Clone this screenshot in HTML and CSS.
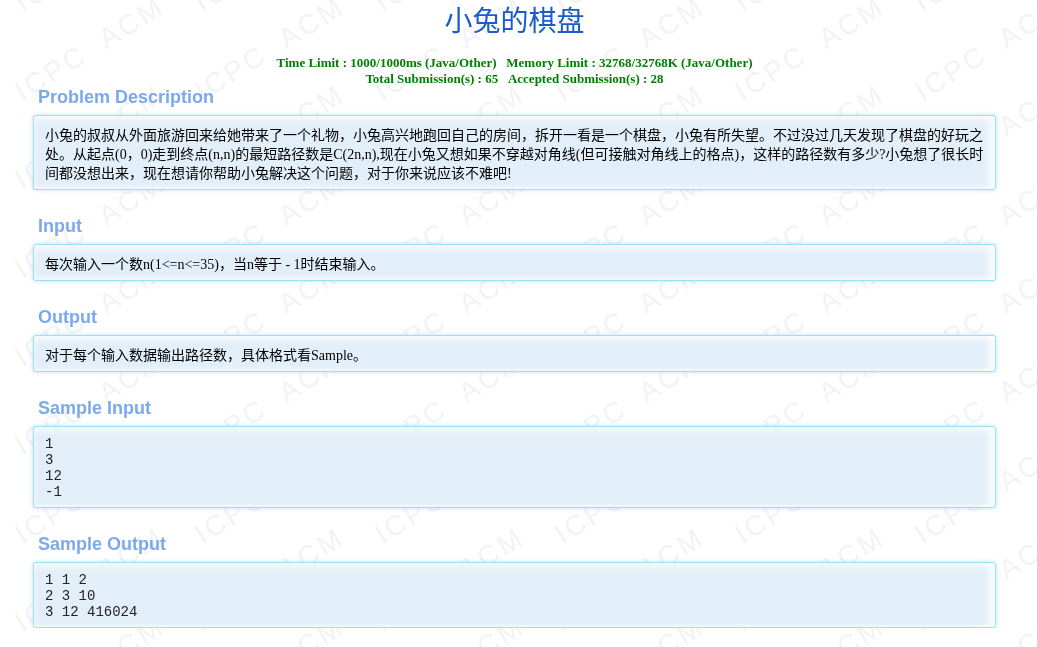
FILE: index.html
```html
<!DOCTYPE html>
<html lang="zh-CN">
<head>
<meta charset="utf-8">
<title>小兔的棋盘</title>
<link rel="stylesheet" href="styles.css">
</head>
<body>
<div class="watermark" aria-hidden="true"><div class="wm-grid"></div></div>
<main class="page">
  <h1 class="title">小兔的棋盘</h1>
  <div class="limits">
    <div>Time Limit : 1000/1000ms (Java/Other)&nbsp;&nbsp;&nbsp;Memory Limit : 32768/32768K (Java/Other)</div>
    <div>Total Submission(s) : 65&nbsp;&nbsp;&nbsp;Accepted Submission(s) : 28</div>
  </div>
  <div class="panels">
    <section class="panel">
      <h2 class="panel-title">Problem Description</h2>
      <div class="panel-content">小兔的叔叔从外面旅游回来给她带来了一个礼物，小兔高兴地跑回自己的房间，拆开一看是一个棋盘，小兔有所失望。不过没过几天发现了棋盘的好玩之处。从起点(0，0)走到终点(n,n)的最短路径数是C(2n,n),现在小兔又想如果不穿越对角线(但可接触对角线上的格点)，这样的路径数有多少?小兔想了很长时间都没想出来，现在想请你帮助小兔解决这个问题，对于你来说应该不难吧!</div>
    </section>
    <section class="panel">
      <h2 class="panel-title">Input</h2>
      <div class="panel-content">每次输入一个数n(1&lt;=n&lt;=35)，当n等于 - 1时结束输入。</div>
    </section>
    <section class="panel">
      <h2 class="panel-title">Output</h2>
      <div class="panel-content">对于每个输入数据输出路径数，具体格式看Sample。</div>
    </section>
    <section class="panel">
      <h2 class="panel-title">Sample Input</h2>
      <pre class="panel-content panel-code">1
3
12
-1</pre>
    </section>
    <section class="panel">
      <h2 class="panel-title">Sample Output</h2>
      <pre class="panel-content panel-code">1 1 2
2 3 10
3 12 416024</pre>
    </section>
  </div>
</main>
<script src="script.js"></script>
</body>
</html>
```

FILE: styles.css
```css
html, body {
  margin: 0;
  padding: 0;
  background: #ffffff;
}

body {
  font-family: "Liberation Serif", "Noto Sans CJK SC", serif;
  color: #000;
}

.watermark {
  position: fixed;
  inset: 0;
  overflow: hidden;
  z-index: 0;
  pointer-events: none;
}

.wm-grid {
  display: grid;
  grid-template-columns: repeat(7, 180px);
  grid-auto-rows: 88.6px;
  margin-top: -84px;
}

.wm-grid span {
  display: flex;
  align-items: center;
  justify-content: center;
  font: 28px "Liberation Sans", sans-serif;
  letter-spacing: 3px;
  color: #f3f3f3;
  white-space: pre;
  transform: rotate(-32deg);
}

.page {
  position: relative;
  z-index: 1;
  width: 963px;
  margin-left: 33px;
}

.title {
  margin: 0 0 18px;
  padding-top: 1px;
  font: 400 28px/36px "Noto Sans CJK SC", sans-serif;
  color: #1a5cc8;
  text-align: center;
}

.limits {
  font: bold 13px/16px "Liberation Serif", serif;
  color: #008000;
  text-align: center;
}

.panels {
  display: flex;
  flex-direction: column;
  gap: 26px;
}

.panel-title {
  margin: 0 0 8px;
  padding-left: 5px;
  font: bold 18px/20px "Liberation Sans", Arial, sans-serif;
  color: #7ca9ed;
}

.panel-content {
  margin: 0;
  padding: 10px 11px 6px;
  border: 1px solid #9edff4;
  border-radius: 3px;
  background: #e2eef8;
  box-shadow:
    0 0 4px rgba(120, 205, 240, 0.55),
    inset 0 9px 7px -5px rgba(255, 255, 255, 0.75),
    inset -12px 0 10px -6px rgba(255, 255, 255, 0.85),
    inset 0 -6px 5px -4px rgba(255, 255, 255, 0.7),
    inset 5px 0 5px -4px rgba(255, 255, 255, 0.6);
  font-size: 14px;
  line-height: 19px;
}

.panel-code {
  padding: 9px 11px 7px;
  font: 14px/16px "Liberation Mono", "Courier New", monospace;
  color: #222;
  white-space: pre;
}
```

FILE: script.js
```js
(function () {
  var grid = document.querySelector('.wm-grid');
  for (var i = 0; i < 7 * 10; i++) {
    var s = document.createElement('span');
    s.textContent = 'ICPC  ACM';
    grid.appendChild(s);
  }
})();
```
